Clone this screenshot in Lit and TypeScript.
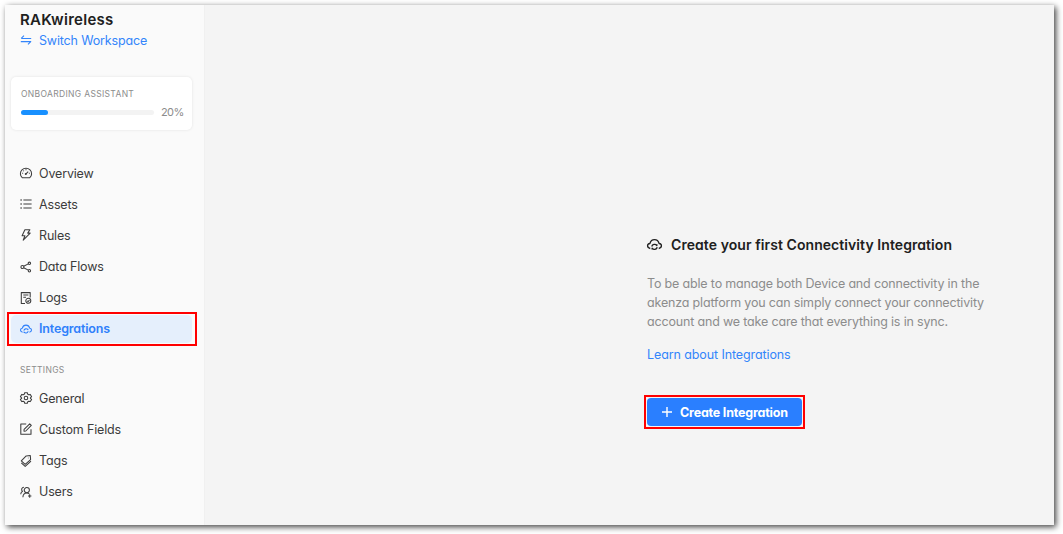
import { LitElement, html, css, svg } from "lit";
import { customElement, property } from "lit/decorators.js";
import { classMap } from "lit/directives/class-map.js";

const ICONS: Record<string, unknown> = {
  swap: svg`<path d="M1.2 4.4H11.2M1.2 4.4L4 1.6M.8 7.6H10.8L8 10.4"/>`,
  overview: svg`<path d="M2.2 10.7A5.6 5.4 0 1 1 9.8 10.7Z"/><path d="M6 6.8L8.2 4.6M6 2.3V3.2M2.2 6.3H3.1M8.9 6.3H9.8M3.3 3.6L3.9 4.2"/><circle cx="5.8" cy="7" r=".5"/>`,
  list: svg`<path d="M3.4 2H11.6M3.4 6H11.6M3.4 10H11.6"/><path d="M.5 2H1.7M.5 6H1.7M.5 10H1.7" stroke-width="1.3"/>`,
  bolt: svg`<path d="M4.9.7H9.9L7.7 4.1H10.2L3.2 11.2L4.9 6.7H2.1Z"/>`,
  share: svg`<circle cx="2.4" cy="6" r="1.5"/><circle cx="9.4" cy="2.3" r="1.2"/><circle cx="9.4" cy="9.7" r="1.2"/><path d="M3.7 5.3L8.3 2.9M3.7 6.7L8.3 9.1"/>`,
  logs: svg`<path d="M5 11.4H1.3V.6H10.2V5.6M3.3 3H8.4M3.3 5.3H6"/><circle cx="8.3" cy="8.8" r="2.5"/><path d="M7.2 8.8L8.1 9.6L9.5 8"/>`,
  cloud: svg`<path d="M2.6 9.2C-.3 8.6-.1 5.5 2.3 5.2C3.4 1.1 8.6 1.1 9.7 5.2C12.1 5.5 12.3 8.6 9.4 9.2"/><path d="M3.8 7.6A2.3 2.3 0 0 1 7.9 6.8V5.8M8.2 8.2A2.3 2.3 0 0 1 4.1 9V10"/>`,
  gear: svg`<path d="M4.7.7H7.3L7.8 2.3L8.7 2.8L10.3 2.4L11.6 4.7L10.4 5.8V6.4L11.6 7.4L10.3 9.6L8.7 9.2L7.8 9.7L7.3 11.3H4.7L4.2 9.7L3.3 9.2L1.7 9.6L.4 7.4L1.6 6.4V5.8L.4 4.7L1.7 2.4L3.3 2.8L4.2 2.3Z"/><circle cx="6" cy="6" r="1.8"/>`,
  edit: svg`<path d="M6.2 1H.8V11.2H11V6.2"/><path d="M4.1 6.3L9.7.8L11.3 2.4L5.8 8L4 8.2Z"/>`,
  tags: svg`<path d="M6.2.9L10.3.5L10.6 4.6L5.2 9.3L1.3 5.8Z"/><path d="M1.3 7.8L5.2 11.4L11 6.2M8.4 2.7V3.3"/>`,
  users: svg`<circle cx="6.8" cy="4.1" r="2.6"/><path d="M2.9 11.2C3 8.5 4.5 7 6.8 7C7.8 7 8.6 7.3 9.3 7.9M4 1.2A2.3 2.3 0 0 0 2.5 5.3C1.4 5.9 .8 6.9 .7 8.3M8 10H11.4M9.7 8.3V11.7"/>`,
  plus: svg`<path d="M6 0V12M0 6H12" stroke-width="1.7"/>`,
};

@customElement("line-icon")
class LineIcon extends LitElement {
  @property() name = "";
  static styles = css`
    :host { display: block; flex: none; width: 12px; height: 12px; }
    svg { display: block; width: 100%; height: 100%; overflow: visible; fill: none; stroke: currentColor; stroke-width: 1.05; stroke-linejoin: round; }
  `;
  render() {
    return html`<svg viewBox="0 0 12 12">${ICONS[this.name]}</svg>`;
  }
}

@customElement("app-root")
class AppRoot extends LitElement {
  static styles = css`
    :host {
      display: block;
      box-sizing: border-box;
      height: 534px;
      padding: 5px 9px 9px 5px;
      background: #fff;
      font: 12.5px/20px Inter, sans-serif;
      letter-spacing: -0.16px;
      font-feature-settings: "cv11";
      color: #3c3c3c;
    }
    * { box-sizing: border-box; }
    .frame { display: flex; height: 520px; background: #f4f4f4; box-shadow: 2px 2px 6px rgba(0, 0, 0, 0.75); }
    .side { width: 200px; flex: none; padding: 4px 0 0; background: #fafafa; border-right: 1px solid #f0f0f0; }
    .brand { padding-left: 15px; font-size: 15px; font-weight: 600; line-height: 21px; letter-spacing: 0.27px; color: #202020; }
    .row { display: flex; align-items: center; }
    .switch { padding-left: 15px; gap: 7px; height: 22px; color: #3385fb; }
    .switch line-icon { margin-top: -2px; }
    .assist { width: 181px; height: 53px; margin: 25px 0 0 6px; padding: 10px 10px 0; background: #fff; border-radius: 5px; box-shadow: 0 0 3px rgba(0, 0, 0, 0.1); }
    .cap { font-size: 8.5px; line-height: 14px; letter-spacing: 0.33px; color: #8c8c8c; }
    .meter { height: 22px; gap: 7px; font-size: 11px; letter-spacing: -0.6px; color: #8c8c8c; }
    .meter span { margin-top: -1px; }
    .track { flex: none; width: 133px; height: 5px; border-radius: 3px; background: #f3f3f3; }
    .fill { height: 5px; border-radius: 3px; background: #1890ff; }
    .nav { padding: 29px 0 0 6px; }
    .item { position: relative; width: 181px; height: 28px; margin-bottom: 3.2px; padding-left: 9px; gap: 7px; border-radius: 5px; }
    .item span { padding-top: 1px; }
    .active { background: #e5effc; color: #2f80fb; font-weight: 600; }
    .mark::after { content: ""; position: absolute; inset: -3px -5px -3px -4px; border: 2px solid #f00; }
    .group { padding: 17px 0 0 15px; }
    .settings { padding-top: 7px; }
    .main { flex: 1; padding: 228px 0 0 442px; }
    .title { gap: 9px; height: 22px; font-size: 14px; letter-spacing: 0.07px; font-weight: 600; color: #202020; }
    .title span { padding-top: 1px; }
    .title line-icon { width: 15px; height: 15px; }
    .copy { margin: 19px 0 0; line-height: 19px; color: #8c8c8c; white-space: nowrap; letter-spacing: -0.17px; }
    .copy span { display: block; }
    .link { margin-top: 14px; letter-spacing: -0.1px; color: #3385fb; }
    .btn { position: relative; display: flex; align-items: center; width: 155px; height: 28px; margin-top: 33px; padding: 0 0 0 15px; gap: 8px; border: 0; border-radius: 4px; background: #2a7fff; color: #fff; font: inherit; font-weight: 700; font-feature-settings: inherit; letter-spacing: -0.2px; white-space: nowrap; }
    .btn span { padding-top: 1px; }
    .btn.mark::after { inset: -3px; }
    .btn line-icon { width: 10px; height: 10px; }
  `;

  private item(icon: string, label: string, active = false) {
    return html`<div class=${classMap({ row: true, item: true, active, mark: active })}>
      <line-icon name=${icon}></line-icon><span>${label}</span>
    </div>`;
  }

  render() {
    const progress = 20;
    return html`<div class="frame">
      <aside class="side">
        <div class="brand">RAKwireless</div>
        <div class="row switch"><line-icon name="swap"></line-icon><span>Switch Workspace</span></div>
        <div class="assist">
          <div class="cap">ONBOARDING ASSISTANT</div>
          <div class="row meter">
            <div class="track"><div class="fill" style="width:${progress}%"></div></div>
            <span>${progress}%</span>
          </div>
        </div>
        <nav class="nav">
          ${this.item("overview", "Overview")}
          ${this.item("list", "Assets")}
          ${this.item("bolt", "Rules")}
          ${this.item("share", "Data Flows")}
          ${this.item("logs", "Logs")}
          ${this.item("cloud", "Integrations", true)}
        </nav>
        <div class="cap group">SETTINGS</div>
        <nav class="nav settings">
          ${this.item("gear", "General")}
          ${this.item("edit", "Custom Fields")}
          ${this.item("tags", "Tags")}
          ${this.item("users", "Users")}
        </nav>
      </aside>
      <main class="main">
        <div class="row title"><line-icon name="cloud"></line-icon><span>Create your first Connectivity Integration</span></div>
        <p class="copy">
          <span>To be able to manage both Device and connectivity in the</span>
          <span>akenza platform you can simply connect your connectivity</span>
          <span>account and we take care that everything is in sync.</span>
        </p>
        <div class="link">Learn about Integrations</div>
        <button class="btn mark"><line-icon name="plus"></line-icon><span>Create Integration</span></button>
      </main>
    </div>`;
  }
}
